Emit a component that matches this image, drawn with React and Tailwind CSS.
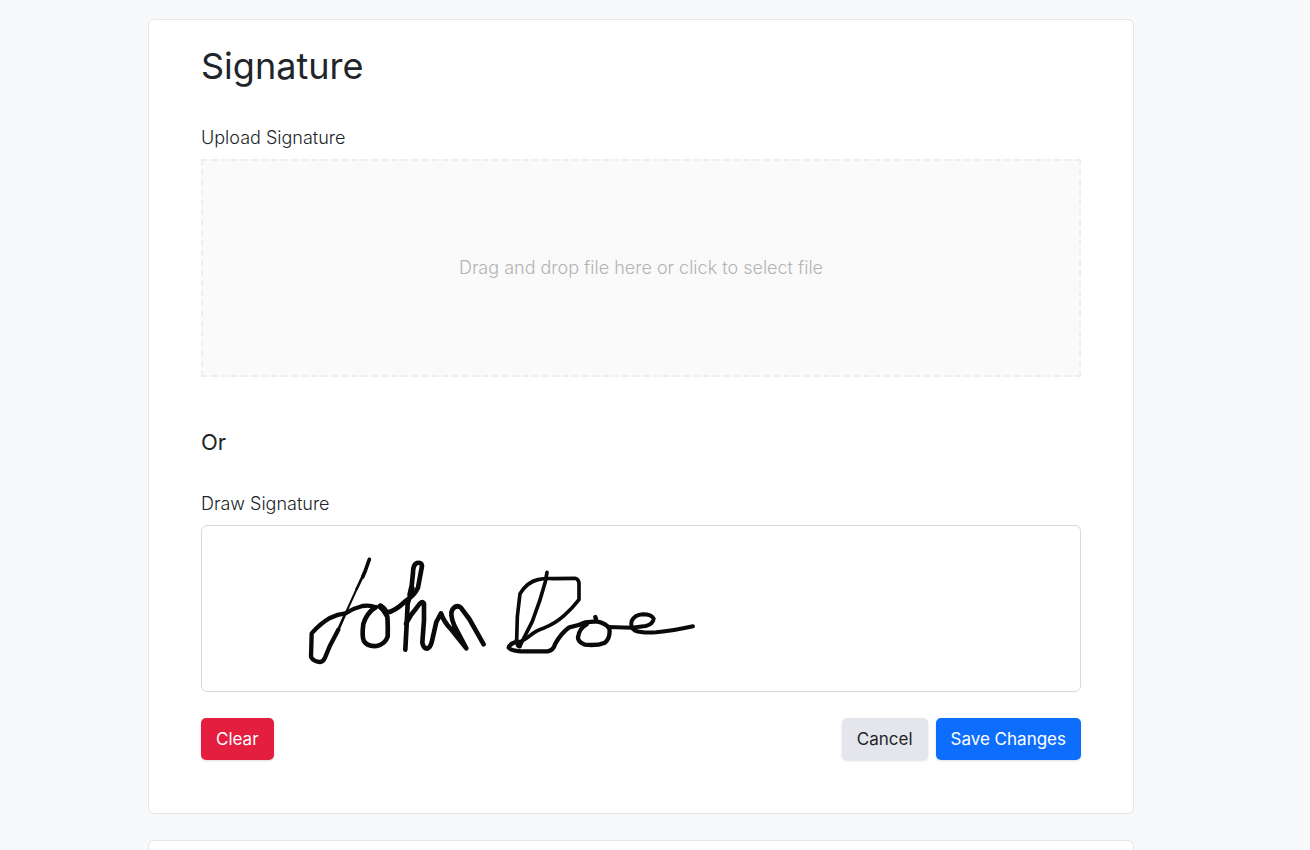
import { useState } from 'react';

function SignatureStrokes() {
  return (
    <svg
      width="500"
      height="164"
      viewBox="0 0 500 164"
      fill="none"
      stroke="#0a0a0a"
      strokeLinecap="round"
      strokeLinejoin="round"
      role="img"
      aria-labelledby="draw-label"
      className="block max-w-full"
    >
      {/* first name */}
      <g transform="translate(93 19) scale(0.3333)" strokeWidth="14">
        <path d="M223 43L211 77L203 96" strokeWidth="11" />
        <path d="M211 77L185 132" strokeWidth="8" />
        <path d="M185 132L166 174L148 213" strokeWidth="6" />
        <path d="M148 213L130 254" strokeWidth="8" />
        <path d="M130 254L104 304L90 338Q84 352 74 351Q56 350 48 336L50 265Q76 236 105 219Q128 207 151 205Q174 190 202 183Q226 179 242 187" strokeWidth="13" />
        <path d="M242 187Q216 203 205 237Q200 275 207 289Q217 305 245 303Q271 297 278 275Q279 240 277 215Q266 199 258 183Q270 190 275 203Q300 199 332 168Q359 151 369 128L381 63Q380 51 366 54Q354 59 354 83L348 143L338 176L335 238L331 314" />
        <path d="M256 184L264 192M350 130L346 148" strokeWidth="18" />
        <path d="M333 236L348 210L366 187Q382 163 387 176L387 226L382 293Q385 311 397 311Q407 307 411 288L424 231L438 205Q448 232 466 250L514 310L478 242Q464 207 472 194Q484 178 497 187L523 222L566 298" />
      </g>
      {/* last name */}
      <g transform="translate(288 19) scale(0.3333)" strokeWidth="12">
        <path d="M171 82L166 110L149 168L127 229L89 304" strokeWidth="11" />
        <path d="M80 287L82 215L90 146Q112 111 144 104Q165 99 190 101L255 100Q268 103 267 120L267 164Q247 190 222 212Q195 236 164 248Q137 257 121 271Q102 287 86 291" strokeWidth="11" />
        <path d="M80 287Q82 304 89 304L80 290Q57 298 56 308Q62 317 92 319L173 319Q190 316 195 298Q212 266 238 247Q263 243 285 232L320 229L316 216L320 229Q348 235 358 250Q362 278 345 293Q320 303 285 299Q263 290 264 277Q268 249 290 238" strokeWidth="13" />
        <path d="M354 246L425 248L467 243Q489 237 491 221Q484 208 458 208Q435 209 425 228Q420 249 435 257Q456 265 499 262Q550 257 609 244" />
      </g>
    </svg>
  );
}

export default function SignatureSettings() {
  const [signed, setSigned] = useState(true);
  const [fileName, setFileName] = useState('');

  return (
    <div className="bg-[#f8f9fb] pr-[52px] pl-6 font-['Inter',sans-serif] text-lg font-light text-[#212529]">
      <main className="mx-auto flex min-h-screen max-w-[986px] flex-col gap-[26px] pt-[19px]">
        <section className="rounded-md border border-[#e4e6e9] bg-white px-[52px] pt-[21px] pb-[53px]">
          <h1 className="text-4xl leading-[50px] font-normal">Signature</h1>

          <form className="mt-8" onSubmit={(e) => e.preventDefault()}>
            <span className="block leading-[30px]">Upload Signature</span>
            <label className="mt-[6px] flex h-[218px] cursor-pointer items-center justify-center border-2 border-dashed border-[#eeeeee] bg-[#fafafa] text-[#b3b3b3]">
              {fileName || 'Drag and drop file here or click to select file'}
              <input
                type="file"
                accept="image/*"
                className="sr-only"
                onChange={(e) => setFileName(e.target.files?.[0]?.name ?? '')}
              />
            </label>

            <h2 className="mt-[49px] text-[22px] leading-8 font-normal">Or</h2>

            <span id="draw-label" className="mt-[31px] block leading-[30px]">Draw Signature</span>
            <div className="mt-[6px] h-[167px] overflow-hidden rounded-md border border-[#d5dade]">
              {signed && <SignatureStrokes />}
            </div>

            <div className="mt-[26px] flex items-center gap-2 text-[17px] font-normal">
              <button
                type="button"
                onClick={() => setSigned(false)}
                className="mr-auto h-[42px] rounded-[5px] bg-[#e41e3f] px-[15px] text-white shadow-sm"
              >
                Clear
              </button>
              <button type="button" className="h-[42px] rounded-[5px] bg-[#e4e6eb] px-[15px] shadow-sm">
                Cancel
              </button>
              <button type="submit" className="h-[42px] rounded-[5px] bg-[#0d6efd] px-[15px] text-white shadow-sm">
                Save Changes
              </button>
            </div>
          </form>
        </section>

        <section className="flex-1 rounded-t-md border border-b-0 border-[#e4e6e9] bg-white" />
      </main>
    </div>
  );
}
